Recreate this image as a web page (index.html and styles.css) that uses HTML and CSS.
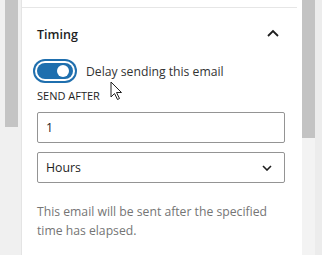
FILE: index.html
```html
<!DOCTYPE html>
<html>
<head>
<meta charset="utf-8">
<link rel="stylesheet" href="styles.css">
</head>
<body>
<div class="screen">
  <div class="gutter-left"><div class="thumb-left"></div></div>
  <div class="panel">
    <div class="panel-top"></div>
    <div class="section">
      <div class="section-head">
        <span class="title">Timing</span>
        <svg class="chev-up" width="12" height="8" viewBox="0 0 12 8"><path d="M1 7 L6 2 L11 7" fill="none" stroke="#1e1e1e" stroke-width="1.8"/></svg>
      </div>
      <div class="toggle-row">
        <span class="toggle"><span class="knob"></span></span>
        <span class="toggle-label">Delay sending this email</span>
      </div>
      <div class="field-label">SEND AFTER</div>
      <div class="input">1</div>
      <div class="select"><span>Hours</span>
        <svg class="chev-down" width="10" height="6" viewBox="0 0 10 6"><path d="M1 1 L5 5 L9 1" fill="none" stroke="#1e1e1e" stroke-width="1.6"/></svg>
      </div>
      <p class="help">This email will be sent after the specified time has elapsed.</p>
    </div>
  </div>
  <div class="gutter-right"><div class="thumb-right"></div></div>
</div>
<svg class="cursor" width="14" height="20" viewBox="0 0 14 20"><path d="M1 1 L1 16 L4.5 12.5 L7.5 18.5 L9.5 17.5 L6.5 11.5 L11.5 11.5 Z" fill="#fff" stroke="#222" stroke-width="1" stroke-linejoin="round"/></svg>
</body>
</html>
```
FILE: styles.css
```css
html, body {
  margin: 0;
  padding: 0;
}
body {
  width: 322px;
  height: 255px;
  overflow: hidden;
  background: #f0f0f0;
  font-family: "Open Sans", "Liberation Sans", sans-serif;
  position: relative;
}
.screen {
  display: flex;
  height: 255px;
}
.gutter-left {
  width: 13px;
  margin-left: 5px;
  margin-right: 3px;
}
.thumb-left {
  height: 127px;
  background: #c4c4c4;
}
.panel {
  width: 280px;
  background: #fff;
  border-left: 1px solid #e4e4e4;
  display: flex;
  flex-direction: column;
}
.panel-top {
  height: 7px;
  border-bottom: 1px solid #e6e6e6;
  margin-right: 5px;
}
.section {
  padding: 16px 17px 0 15px;
}
.section-head {
  display: flex;
  justify-content: space-between;
  align-items: center;
  height: 20px;
}
.title {
  font-size: 12.5px;
  font-weight: 600;
  color: #1e1e1e;
}
.chev-up {
  margin-right: 6px;
  margin-top: -3px;
}
.toggle-row {
  display: flex;
  align-items: center;
  margin-top: 19px;
  height: 16px;
}
.toggle {
  width: 36px;
  height: 16px;
  border-radius: 8px;
  background: #1f6fae;
  box-shadow: 0 0 0 2px #fff, 0 0 0 4px #1f6fae;
  position: relative;
  display: block;
}
.knob {
  position: absolute;
  width: 12px;
  height: 12px;
  border-radius: 50%;
  background: #fff;
  top: 2px;
  right: 4px;
}
.toggle-label {
  margin-left: 13px;
  font-size: 12.2px;
  color: #333;
}
.field-label {
  margin-top: 9px;
  font-size: 11px;
  font-weight: 500;
  color: #1e1e1e;
  line-height: 16px;
}
.input, .select {
  box-sizing: border-box;
  width: 248px;
  height: 31px;
  border: 1px solid #949494;
  border-radius: 2px;
  font-size: 12.3px;
  color: #1e1e1e;
  padding: 0 8px;
  display: flex;
  align-items: center;
}
.input {
  margin-top: 8px;
}
.select {
  margin-top: 9px;
  justify-content: space-between;
}
.chev-down {
  margin-right: 4px;
}
.help {
  margin: 19px 0 0;
  font-size: 12.2px;
  line-height: 19px;
  color: #757575;
}
.gutter-right {
  width: 13px;
  background: #f3f3f3;
  border-right: 7px solid #ececec;
}
.thumb-right {
  height: 138px;
  background: #c3c3c3;
}
.cursor {
  position: absolute;
  left: 110px;
  top: 81px;
}
```
